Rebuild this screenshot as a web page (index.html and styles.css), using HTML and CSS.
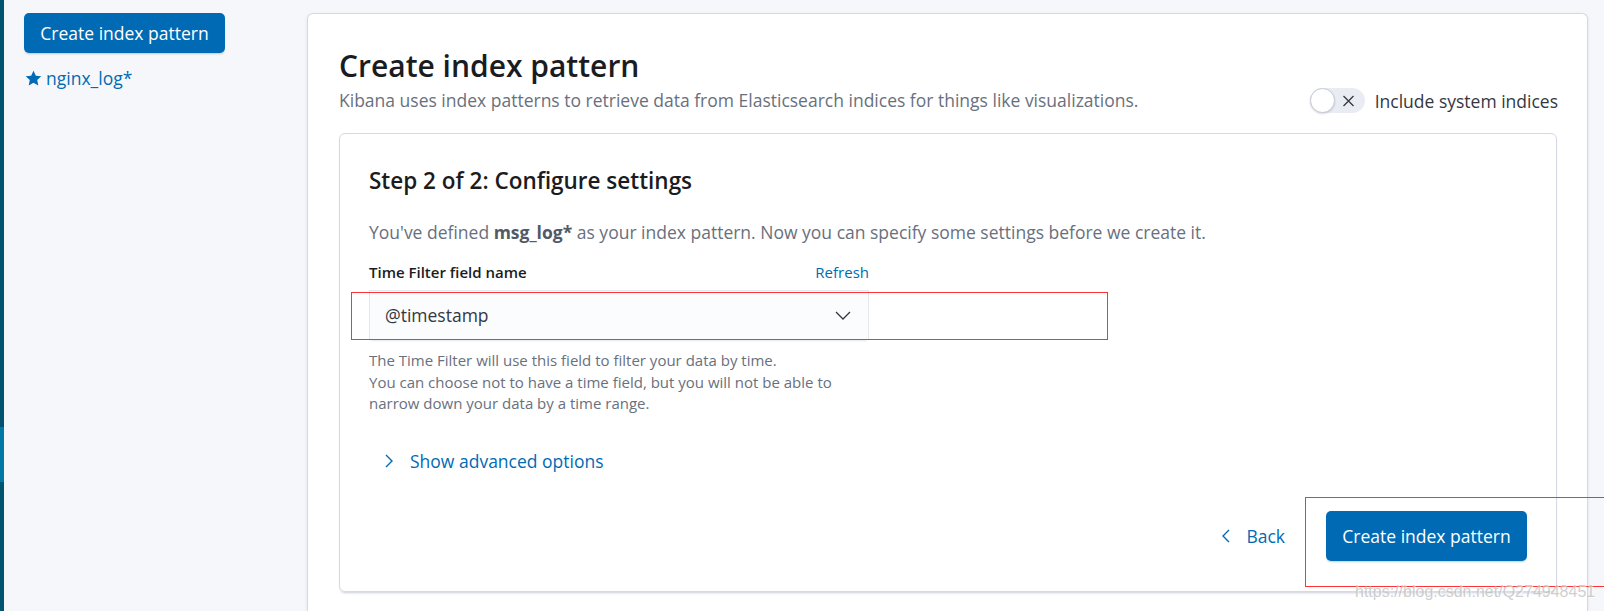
FILE: index.html
```html
<!DOCTYPE html>
<html lang="en">
<head>
<meta charset="utf-8">
<title>Create index pattern</title>
<link rel="stylesheet" href="styles.css">
</head>
<body>
<div class="rail"></div>
<aside class="sidebar">
  <button class="btn btn-primary btn-side">Create index pattern</button>
  <a class="pattern-link" href="#">
    <svg class="star" width="17" height="16" viewBox="0 0 16 16"><path d="M8 .6l2.2 4.7 5.1.6-3.8 3.5 1 5.1L8 11.9 3.5 14.5l1-5.1L.7 5.9l5.1-.6z" fill="#006bb4"/></svg>
    <span>nginx_log*</span>
  </a>
</aside>
<main class="main">
  <section class="panel">
    <header class="page-header">
      <div class="page-header-text">
        <h1 class="page-title">Create index pattern</h1>
        <p class="page-subtitle">Kibana uses index patterns to retrieve data from Elasticsearch indices for things like visualizations.</p>
      </div>
      <label class="switch-row">
        <span class="switch">
          <span class="switch-knob"></span>
          <svg class="switch-x" width="13" height="12" viewBox="0 0 13 12"><path d="M1.5 1l10 10M11.5 1l-10 10" stroke="#343741" stroke-width="1.3" fill="none"/></svg>
        </span>
        <span class="switch-label">Include system indices</span>
      </label>
    </header>

    <div class="card">
      <h2 class="step-title">Step 2 of 2: Configure settings</h2>
      <p class="step-desc">You've defined <strong>msg_log*</strong> as your index pattern. Now you can specify some settings before we create it.</p>

      <div class="form-row">
        <div class="label-row">
          <span class="form-label">Time Filter field name</span>
          <a class="refresh" href="#">Refresh</a>
        </div>
        <div class="select-wrap">
          <div class="select">
            <span>@timestamp</span>
            <svg class="select-arrow" width="16" height="9" viewBox="0 0 16 9"><path d="M1 1l7 7 7-7" stroke="#343741" stroke-width="1.3" fill="none"/></svg>
          </div>
          <div class="annot annot-select"></div>
        </div>
        <p class="help">The Time Filter will use this field to filter your data by time.<br>You can choose not to have a time field, but you will not be able to narrow down your data by a time range.</p>
      </div>

      <a class="advanced" href="#">
        <svg width="8" height="14" viewBox="0 0 8 14"><path d="M1 1l6 6-6 6" stroke="#006bb4" stroke-width="1.4" fill="none"/></svg>
        <span>Show advanced options</span>
      </a>

      <div class="footer">
        <a class="back" href="#">
          <svg width="8" height="14" viewBox="0 0 8 14"><path d="M7 1L1 7l6 6" stroke="#006bb4" stroke-width="1.4" fill="none"/></svg>
          <span>Back</span>
        </a>
        <div class="create-wrap">
          <button class="btn btn-primary btn-create">Create index pattern</button>
          <div class="annot annot-create"></div>
        </div>
      </div>
    </div>
  </section>
</main>
<div class="watermark">https://blog.csdn.net/Q274948451</div>
</body>
</html>
```

FILE: styles.css
```css
* { box-sizing: border-box; }

html, body {
  margin: 0;
  height: 611px;
  overflow: hidden;
}

body {
  display: flex;
  background: #f5f7fa;
  font-family: "Open Sans", "Noto Sans", sans-serif;
  color: #343741;
  position: relative;
}

a { text-decoration: none; }

.rail {
  width: 4px;
  flex: none;
  background: linear-gradient(to bottom, #02536f 0, #02536f 427px, #0079a5 427px, #0079a5 482px, #02536f 482px);
}

.sidebar {
  width: 303px;
  flex: none;
  padding: 13px 0 0 20px;
}

.btn {
  border: none;
  font-family: "Open Sans", sans-serif;
  cursor: pointer;
}

.btn-primary {
  background: #006bb4;
  color: #fff;
  border-radius: 5px;
  box-shadow: 0 2px 2px -1px rgba(54, 97, 126, 0.3);
  font-size: 17.5px;
  padding: 0;
}

.btn-side {
  display: block;
  width: 201px;
  height: 40px;
}

.pattern-link {
  display: flex;
  align-items: center;
  margin-top: 13px;
  margin-left: 1px;
  height: 24px;
  color: #006bb4;
  font-size: 17.5px;
  line-height: 24px;
}

.star {
  width: 17px;
  height: 17px;
  margin-right: 4px;
}

.main {
  flex: 1;
  padding: 13px 16px 0 0;
}

.panel {
  height: 100%;
  background: #fff;
  border: 1px solid #d3dae6;
  border-bottom: none;
  border-radius: 6px 6px 0 0;
  box-shadow: 0 1px 3px rgba(152, 162, 179, 0.25);
  padding: 32px 30px 0 31px;
}

.page-header {
  display: flex;
  justify-content: space-between;
  align-items: flex-end;
}

.page-title {
  margin: 0;
  font-size: 30px;
  line-height: 40px;
  font-weight: 600;
  color: #1a1c21;
}

.page-subtitle {
  margin: 2px 0 0;
  font-size: 17.5px;
  line-height: 24px;
  color: #69707d;
}

.switch-row {
  display: flex;
  align-items: center;
  gap: 10px;
  margin-bottom: -1px;
  margin-right: -1px;
}

.switch {
  position: relative;
  width: 55px;
  height: 25px;
  border-radius: 13px;
  background: #e9edf3;
  display: flex;
  align-items: center;
}

.switch-knob {
  width: 25px;
  height: 25px;
  border-radius: 50%;
  background: #fff;
  border: 1px solid #c5ccd8;
  box-shadow: 0 1px 2px rgba(0, 0, 0, 0.15);
}

.switch-x { margin-left: 7px; }

.switch-label {
  font-size: 17.5px;
  line-height: 24px;
  color: #343741;
}

.card {
  margin-top: 21px;
  border: 1px solid #d3dae6;
  border-radius: 6px;
  box-shadow: 0 1px 2px -1px rgba(152, 162, 179, 0.4), 0 3px 3px -2px rgba(152, 162, 179, 0.4);
  padding: 29px 29px 30px 29px;
}

.step-title {
  margin: 3px 0 0;
  font-size: 22.5px;
  line-height: 30px;
  font-weight: 600;
  color: #1a1c21;
}

.step-desc {
  margin: 24px 0 0;
  font-size: 17.5px;
  line-height: 24px;
  color: #69707d;
}

.step-desc strong {
  color: #535966;
  font-weight: 700;
}

.form-row { width: 500px; }

.label-row {
  margin-top: 18px;
  display: flex;
  justify-content: space-between;
  align-items: baseline;
  height: 20px;
  line-height: 20px;
  font-size: 15px;
}

.form-label {
  font-weight: 600;
  color: #1a1c21;
}

.refresh { color: #006bb4; }

.select-wrap {
  position: relative;
  margin-top: 8px;
}

.select {
  height: 50px;
  background: #fbfcfd;
  border: 1px solid #e3e7ee;
  box-shadow: 0 1px 1px -1px rgba(152, 162, 179, 0.2), 0 3px 2px -2px rgba(152, 162, 179, 0.2);
  display: flex;
  align-items: center;
  justify-content: space-between;
  padding: 0 17px 0 15px;
  font-size: 17.5px;
  color: #343741;
}

.annot {
  position: absolute;
  border: 1px solid #f33;
  pointer-events: none;
}

.annot-select {
  left: -18px;
  top: 2px;
  width: 757px;
  height: 48px;
}

.help {
  margin: 10px 0 0;
  font-size: 15px;
  line-height: 21.5px;
  color: #69707d;
}

.advanced {
  display: flex;
  align-items: center;
  gap: 17px;
  margin-top: 34px;
  margin-left: 16px;
  height: 24px;
  color: #006bb4;
  font-size: 17.5px;
  line-height: 24px;
}

.footer {
  margin-top: 38px;
  display: flex;
  justify-content: flex-end;
  align-items: center;
  gap: 41px;
}

.back {
  display: flex;
  align-items: center;
  gap: 16px;
  color: #006bb4;
  font-size: 17.5px;
  line-height: 24px;
}

.create-wrap { position: relative; }

.btn-create {
  display: block;
  width: 201px;
  height: 50px;
}

.annot-create {
  left: -21px;
  top: -14px;
  width: 320px;
  height: 90px;
}

.watermark {
  position: absolute;
  left: 1355px;
  top: 583px;
  font-family: "Liberation Sans", Arial, sans-serif;
  font-size: 16px;
  color: rgba(190, 190, 190, 0.75);
  text-shadow: 1px 1px 0 rgba(255, 255, 255, 0.6);
  white-space: nowrap;
  pointer-events: none;
}
```
